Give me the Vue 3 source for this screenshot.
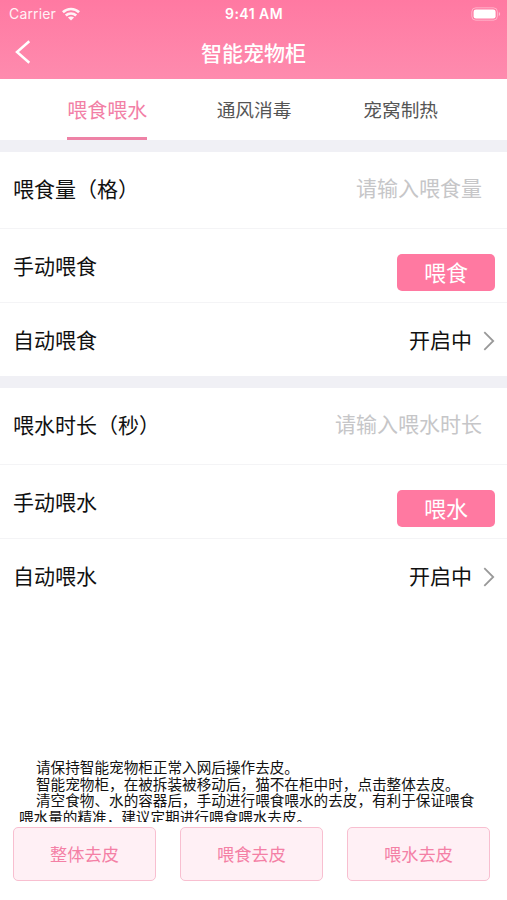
<template>
  <div class="page">
    <header class="header">
      <div class="status-bar">
        <div class="carrier">
          <span>Carrier</span>
          <svg class="wifi" width="18" height="14" viewBox="0 0 18 14" fill="none" stroke="#fff" stroke-width="2.7">
            <path d="M0.9 5.2C5.5 0.9 12.5 0.9 17.1 5.2" />
            <path d="M3.8 8.6C6.8 5.8 11.2 5.8 14.2 8.6" />
            <path d="M9 13.6L5.9 10.6C7.7 9.1 10.3 9.1 12.1 10.6Z" fill="#fff" stroke="none" />
          </svg>
        </div>
        <span class="time">9:41 AM</span>
        <svg class="battery" width="30" height="14" viewBox="0 0 30 14">
          <rect x="0.8" y="0.8" width="25.6" height="12.4" rx="4" fill="none" stroke="#fff" stroke-opacity="0.4" />
          <rect x="2.6" y="2.4" width="22" height="9.2" rx="2.4" fill="#fff" />
          <path d="M27.8 5C29.6 5.7 29.6 8.3 27.8 9Z" fill="#fff" fill-opacity="0.5" />
        </svg>
      </div>
      <div class="nav-bar">
        <button class="back-btn" aria-label="返回">
          <svg width="16" height="24" viewBox="0 0 16 24" fill="none" stroke="#fff" stroke-width="2.5">
            <path d="M14.3 1.2L2 12L14.3 22.8" />
          </svg>
        </button>
        <h1 class="title">智能宠物柜</h1>
      </div>
    </header>

    <nav class="tabs">
      <div
        v-for="(tab, index) in tabs"
        :key="tab"
        :class="['tab', { active: index === current }]"
        @click="current = index"
      >
        <span class="tab-text">{{ tab }}</span>
      </div>
    </nav>

    <section v-for="group in groups" :key="group.action" class="group">
      <div class="row row-input">
        <span class="label">{{ group.label }}</span>
        <input v-model="group.value" class="input" :placeholder="group.placeholder" />
      </div>
      <div class="row row-manual">
        <span class="label">手动{{ group.action }}</span>
        <button class="action-btn">{{ group.action }}</button>
      </div>
      <div class="row row-auto">
        <span class="label">自动{{ group.action }}</span>
        <span class="state">开启中</span>
        <svg class="arrow" width="12" height="20" viewBox="0 0 12 20" fill="none" stroke="#999" stroke-width="1.8">
          <path d="M1.3 1.2L10.2 10L1.3 18.8" />
        </svg>
      </div>
    </section>

    <footer class="footer">
      <div class="tips">
        <p v-for="tip in tips" :key="tip">{{ tip }}</p>
      </div>
      <div class="buttons">
        <button v-for="name in peelButtons" :key="name" class="peel-btn">{{ name }}</button>
      </div>
    </footer>
  </div>
</template>

<script setup>
import { ref } from 'vue'

const tabs = ['喂食喂水', '通风消毒', '宠窝制热']
const current = ref(0)

const groups = ref([
  { action: '喂食', label: '喂食量（格）', placeholder: '请输入喂食量', value: '' },
  { action: '喂水', label: '喂水时长（秒）', placeholder: '请输入喂水时长', value: '' }
])

const tips = [
  '请保持智能宠物柜正常入网后操作去皮。',
  '智能宠物柜，在被拆装被移动后，猫不在柜中时，点击整体去皮。',
  '清空食物、水的容器后，手动进行喂食喂水的去皮，有利于保证喂食喂水量的精准，建议定期进行喂食喂水去皮。'
]

const peelButtons = ['整体去皮', '喂食去皮', '喂水去皮']
</script>

<style>
body {
  margin: 0;
  background: #fff;
}
</style>

<style scoped>
.page {
  display: flex;
  flex-direction: column;
  height: 900px;
  overflow: hidden;
  background: #fff;
  font-family: "Noto Sans CJK SC", sans-serif;
  color: #111;
}

button,
input {
  padding: 0;
  border: none;
  background: none;
  font-family: inherit;
}

.header {
  height: 79px;
  flex-shrink: 0;
  background: linear-gradient(180deg, #ff79a2 0%, #fe8bae 100%);
  color: #fff;
}

.status-bar {
  display: grid;
  grid-template-columns: 1fr auto 1fr;
  align-items: center;
  height: 27px;
  padding: 0 6px 0 9px;
  font-family: Inter, sans-serif;
  font-size: 14px;
}

.carrier {
  display: flex;
  align-items: center;
  gap: 6px;
  letter-spacing: 0.15px;
  opacity: 0.9;
}

.time {
  margin-right: 2px;
  font-weight: 600;
  letter-spacing: 0.45px;
}

.battery {
  justify-self: end;
}

.nav-bar {
  display: grid;
  grid-template-columns: 60px 1fr 60px;
  align-items: center;
  height: 50px;
}

.back-btn {
  display: flex;
  padding-left: 15px;
}

.title {
  margin: 0;
  font-size: 21px;
  line-height: 30px;
  font-weight: 500;
  text-align: center;
}

.tabs {
  display: flex;
  height: 61px;
  padding: 0 33px 0 34px;
  flex-shrink: 0;
}

.tab {
  display: flex;
  flex: 1;
  justify-content: center;
  font-size: 18.7px;
  color: #555;
}

.tab-text {
  box-sizing: border-box;
  height: 61px;
  line-height: 60px;
}

.tab.active {
  font-size: 20px;
  color: #f27fa6;
}

.tab.active .tab-text {
  border-bottom: 3px solid #ee82a6;
  line-height: 62px;
}

.group {
  border-top: 12px solid #f0f0f5;
}

.row {
  display: flex;
  align-items: center;
  box-sizing: border-box;
  height: 74px;
  padding: 0 12px 0 13px;
  border-bottom: 1px solid #f4f4f6;
  font-size: 21px;
}

.row-input {
  height: 77px;
  padding-right: 25px;
}

.row-auto {
  height: 73px;
  border-bottom: none;
}

.label {
  flex: 1;
  margin-bottom: 1px;
  line-height: 30px;
  white-space: nowrap;
}

.row-input .label {
  margin-bottom: 5px;
}

.state {
  margin-bottom: 2px;
  line-height: 30px;
}

.input {
  width: 230px;
  height: 32px;
  margin-bottom: 6px;
  outline: none;
  font-size: 21px;
  text-align: right;
}

.input::placeholder {
  color: #c6c6c8;
  opacity: 1;
}

.action-btn {
  width: 98px;
  height: 37px;
  margin-top: 13px;
  padding-bottom: 3px;
  border-radius: 5px;
  background: #ff79a1;
  color: #fff;
  font-size: 22px;
  line-height: 34px;
}

.arrow {
  margin: 3px 0 0 11px;
}

.footer {
  margin-top: auto;
  padding: 0 17px 19px 13px;
}

.tips {
  height: 63px;
  margin: 0 10px 5px 6px;
  overflow: hidden;
  font-size: 14.62px;
  line-height: 16.7px;
}

.tips p {
  margin: 0;
  text-indent: 17px;
}

.buttons {
  display: flex;
  gap: 24px;
}

.peel-btn {
  flex: 1;
  height: 54px;
  padding-bottom: 2px;
  border: 1.5px solid #f8bfd0;
  border-radius: 5px;
  background: #fff0f5;
  color: #f480a5;
  font-size: 17.2px;
}
</style>
